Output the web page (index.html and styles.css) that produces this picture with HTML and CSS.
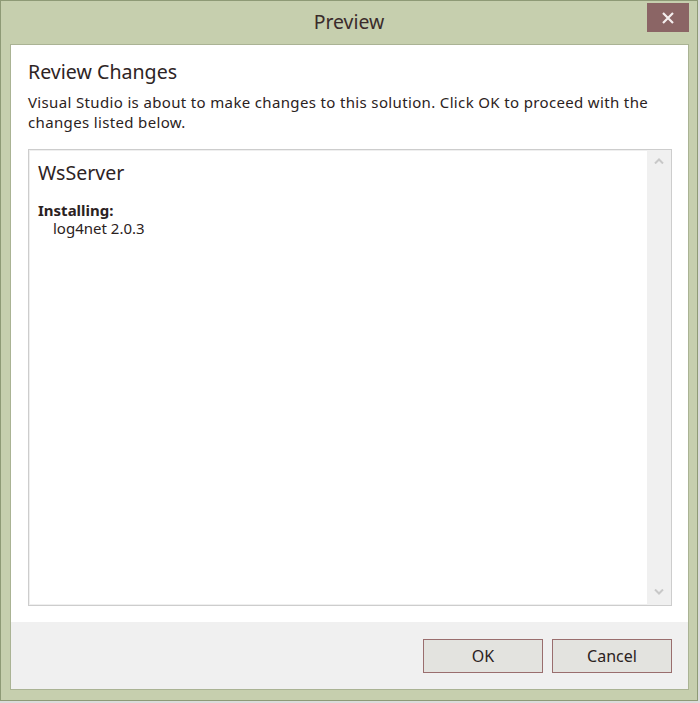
FILE: index.html
```html
<!DOCTYPE html>
<html>
<head>
<meta charset="utf-8">
<link rel="stylesheet" href="styles.css">
</head>
<body>
<div class="window">
  <div class="titlebar">
    <span class="title">Preview</span>
    <div class="close">
      <svg width="14" height="12" viewBox="0 0 14 12"><path d="M2 1 L12 11 M12 1 L2 11" stroke="#f4eeee" stroke-width="2.2" fill="none"/></svg>
    </div>
  </div>
  <div class="client">
    <div class="main">
      <h1 class="heading">Review Changes</h1>
      <p class="desc">Visual Studio is about to make changes to this solution. Click OK to proceed with the changes listed below.</p>
      <div class="listbox">
        <div class="list-content">
          <div class="project">WsServer</div>
          <div class="action">Installing:</div>
          <div class="pkg">log4net 2.0.3</div>
        </div>
        <div class="scrollbar">
          <svg class="arrow" width="10" height="6" viewBox="0 0 10 6"><path d="M1 5.5 L5 1.5 L9 5.5" stroke="#c8c8c8" stroke-width="2" fill="none"/></svg>
          <svg class="arrow" width="10" height="6" viewBox="0 0 10 6"><path d="M1 0.5 L5 4.5 L9 0.5" stroke="#c8c8c8" stroke-width="2" fill="none"/></svg>
        </div>
      </div>
    </div>
    <div class="footer">
      <button class="btn">OK</button>
      <button class="btn">Cancel</button>
    </div>
  </div>
</div>
</body>
</html>
```

FILE: styles.css
```css
html, body {
  margin: 0;
  padding: 0;
}
body {
  width: 700px;
  height: 703px;
  background: #dcdcdc;
  font-family: "Noto Sans", "Open Sans", sans-serif;
  color: #2b2222;
  overflow: hidden;
}
.window {
  width: 696px;
  height: 699px;
  border: 1px solid #8e9a76;
  background: #c6cfae;
  display: flex;
  flex-direction: column;
}
.titlebar {
  height: 43px;
  position: relative;
  display: flex;
  align-items: center;
  justify-content: center;
}
.title {
  font-size: 19.4px;
  color: #3a2b2b;
  margin-top: -2px;
}
.close {
  position: absolute;
  left: 646px;
  top: 2px;
  width: 42px;
  height: 29px;
  background: #8b6565;
  display: flex;
  align-items: center;
  justify-content: center;
}
.client {
  flex: 1;
  margin: 0 8px 10px 9px;
  display: flex;
  flex-direction: column;
  border: 1px solid #aab394;
}
.main {
  flex: 1;
  background: #ffffff;
  padding: 14px 16px 16px 17px;
  display: flex;
  flex-direction: column;
}
.heading {
  margin: 0;
  font-size: 19.6px;
  font-weight: normal;
  line-height: 26px;
  color: #2e2424;
}
.desc {
  margin: 7px 0 17px 0;
  font-size: 15px;
  letter-spacing: 0.35px;
  line-height: 20px;
  color: #2b2222;
}
.listbox {
  flex: 1;
  border: 1px solid #cdcdcd;
  box-shadow: inset 0 0 0 1px #efefef;
  display: flex;
}
.list-content {
  flex: 1;
  padding: 10px 9px;
}
.project {
  font-size: 19.6px;
  line-height: 26px;
  color: #2e2424;
}
.action {
  margin-top: 15px;
  font-size: 15px;
  font-weight: bold;
  line-height: 18px;
}
.pkg {
  font-size: 15px;
  line-height: 18px;
  padding-left: 15px;
}
.scrollbar {
  width: 24px;
  background: #f0f0f0;
  display: flex;
  flex-direction: column;
  justify-content: space-between;
  align-items: center;
  padding: 8px 0 10px 0;
}
.footer {
  height: 67px;
  background: #f0f0f0;
  display: flex;
  justify-content: flex-end;
  align-items: center;
  gap: 9px;
  padding-right: 16px;
}
.btn {
  width: 120px;
  height: 34px;
  border: 1px solid #9a6e6e;
  background: #e3e3df;
  font-family: "Noto Sans", "Open Sans", sans-serif;
  font-size: 16px;
  color: #2b2222;
  padding: 0;
}
```
